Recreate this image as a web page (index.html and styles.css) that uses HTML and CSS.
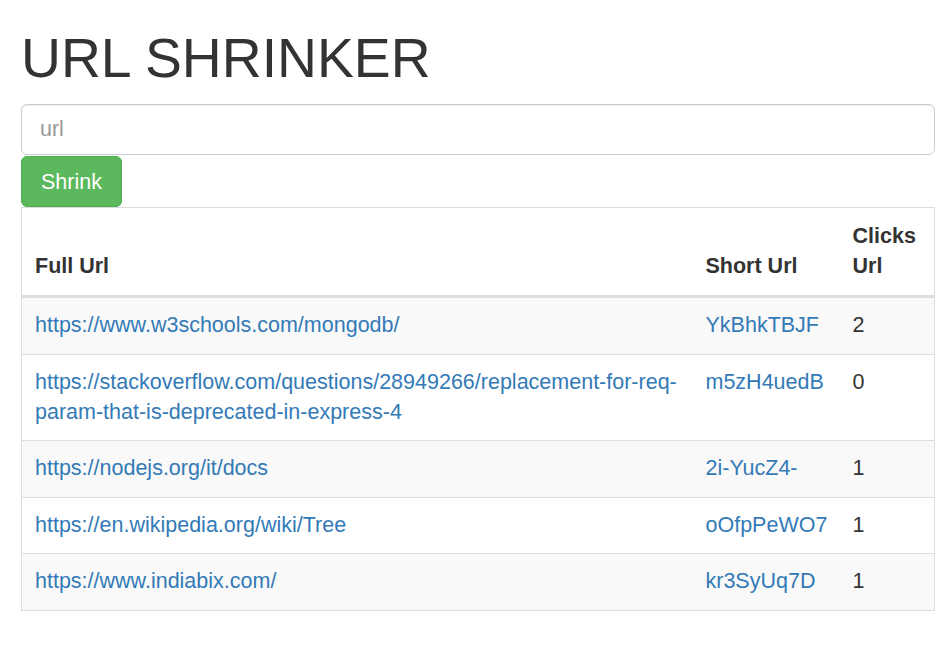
FILE: index.html
```html
<!DOCTYPE html>
<html>
<head>
<meta charset="utf-8">
<title>URL Shrinker</title>
<link rel="stylesheet" href="styles.css">
</head>
<body>
<div class="container">
  <h1 class="title">URL SHRINKER</h1>
  <form class="shrink-form">
    <input class="url-input" type="text" placeholder="url">
    <button class="btn-shrink" type="button">Shrink</button>
  </form>
  <table class="url-table">
    <colgroup>
      <col>
      <col class="col-short">
      <col class="col-clicks">
    </colgroup>
    <thead>
      <tr><th>Full Url</th><th>Short Url</th><th>Clicks Url</th></tr>
    </thead>
    <tbody>
      <tr><td><a href="#">https://www.w3schools.com/mongodb/</a></td><td><a href="#">YkBhkTBJF</a></td><td>2</td></tr>
      <tr><td><a href="#">https://stackoverflow.com/questions/28949266/replacement-for-req-param-that-is-deprecated-in-express-4</a></td><td><a href="#">m5zH4uedB</a></td><td>0</td></tr>
      <tr><td><a href="#">https://nodejs.org/it/docs</a></td><td><a href="#">2i-YucZ4-</a></td><td>1</td></tr>
      <tr><td><a href="#">https://en.wikipedia.org/wiki/Tree</a></td><td><a href="#">oOfpPeWO7</a></td><td>1</td></tr>
      <tr><td><a href="#">https://www.indiabix.com/</a></td><td><a href="#">kr3SyUq7D</a></td><td>1</td></tr>
    </tbody>
  </table>
</div>
</body>
</html>
```
FILE: styles.css
```css
html, body {
  margin: 0;
  padding: 0;
  background: #fff;
}
body {
  font-family: "Liberation Sans", Arial, Helvetica, sans-serif;
  font-size: 21.5px;
  line-height: 30px;
  color: #333;
}
.container {
  padding: 29px 13px 0 21px;
}
.title {
  margin: 0 0 16px;
  font-size: 55.3px;
  line-height: 59px;
  font-weight: 400;
  color: #333;
}
.shrink-form {
  display: flex;
  flex-direction: column;
  align-items: flex-start;
  margin: 0;
}
.url-input {
  box-sizing: border-box;
  width: 100%;
  height: 51px;
  padding: 9px 18px;
  font-family: inherit;
  font-size: 21.5px;
  line-height: 30px;
  color: #555;
  background: #fff;
  border: 1px solid #ccc;
  border-radius: 6px;
  box-shadow: inset 0 1px 1px rgba(0,0,0,.075);
  outline: none;
}
.url-input::placeholder {
  color: #999;
}
.btn-shrink {
  box-sizing: border-box;
  height: 51px;
  margin-top: 1px;
  padding: 9px 19px;
  font-family: inherit;
  font-size: 21.5px;
  line-height: 30px;
  color: #fff;
  background: #5cb85c;
  border: 1px solid #4cae4c;
  border-radius: 6px;
  cursor: pointer;
}
.url-table {
  width: 100%;
  table-layout: fixed;
  border-collapse: collapse;
  border: 1px solid #ddd;
  margin: 0;
}
.col-short { width: 147px; }
.col-clicks { width: 95px; }
.url-table th {
  text-align: left;
  vertical-align: bottom;
  font-weight: 700;
  padding: 13px 12px 14px 13px;
  border-bottom: 3px solid #ddd;
}
.url-table td {
  vertical-align: top;
  padding: 12px 12px 13.5px 13px;
  border-top: 1px solid #ddd;
}
.url-table tbody tr:nth-child(odd) {
  background: #f9f9f9;
}
.url-table a {
  color: #337ab7;
  text-decoration: none;
}
```
